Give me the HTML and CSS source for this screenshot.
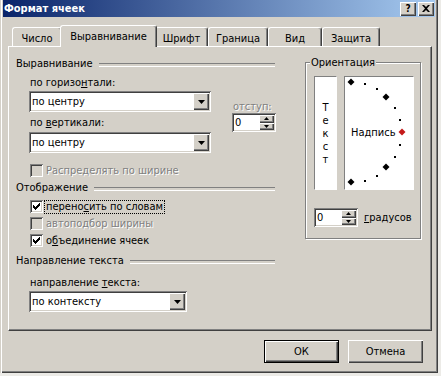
FILE: index.html
```html
<!DOCTYPE html>
<html lang="ru">
<head>
<meta charset="utf-8">
<title>Формат ячеек</title>
<link rel="stylesheet" href="styles.css">
</head>
<body>
<div class="window">
  <div class="titlebar">
    <span class="title">Формат ячеек</span>
    <span class="tbtn tbtn-help">?</span>
    <span class="tbtn"><svg width="8" height="7" viewBox="0 0 8 7"><path d="M0 0h2l2 2 2-2h2L5 3.5 8 7H6L4 5 2 7H0l3-3.5z" fill="#000"/></svg></span>
  </div>
  <div class="client">
    <div class="tabs">
      <div class="tab tab-num">Число</div>
      <div class="tab tab-align active">Выравнивание</div>
      <div class="tab tab-font">Шрифт</div>
      <div class="tab tab-border">Граница</div>
      <div class="tab tab-view">Вид</div>
      <div class="tab tab-prot">Защита</div>
    </div>
    <div class="panel">
      <div class="left">
        <div class="sect">Выравнивание</div>
        <div class="align-body">
          <div class="combos">
            <div class="lbl">по горизо<u>н</u>тали:</div>
            <div class="combo combo-wide">
              <span class="combo-val">по центру</span>
              <span class="drop"><svg width="7" height="4" viewBox="0 0 7 4"><path d="M0 0h7L3.5 4z" fill="#000"/></svg></span>
            </div>
            <div class="lbl lbl-2"><span>по <u>в</u>ертикали:</span></div>
            <div class="combo combo-wide combo-2">
              <span class="combo-val">по центру</span>
              <span class="drop"><svg width="7" height="4" viewBox="0 0 7 4"><path d="M0 0h7L3.5 4z" fill="#000"/></svg></span>
            </div>
          </div>
          <div class="indent">
            <div class="lbl disabled">отступ:</div>
            <div class="spin">
              <span class="spin-val">0</span>
              <span class="spin-btns">
                <span class="sb"><svg width="5" height="3" viewBox="0 0 5 3"><path d="M2.5 0L5 3H0z" fill="#000"/></svg></span>
                <span class="sb"><svg width="5" height="3" viewBox="0 0 5 3"><path d="M0 0h5L2.5 3z" fill="#000"/></svg></span>
              </span>
            </div>
          </div>
        </div>
        <div class="cb-row cb-first disabled">
          <span class="cbox off"></span><span class="cb-text">Распределять по ширине</span>
        </div>
        <div class="sect sect-2">Отображение</div>
        <div class="cb-row cb-a">
          <span class="cbox"><svg width="7" height="7" viewBox="0 0 7 7" shape-rendering="crispEdges"><path d="M0 2h1v3H0zM1 3h1v3H1zM2 4h1v3H2zM3 3h1v3H3zM4 2h1v3H4zM5 1h1v3H5zM6 0h1v3H6z" fill="#000"/></svg></span><span class="cb-text focus">перено<u>с</u>ить по словам</span>
        </div>
        <div class="cb-row cb-b disabled">
          <span class="cbox off"></span><span class="cb-text">автоподбор ширины</span>
        </div>
        <div class="cb-row cb-b">
          <span class="cbox"><svg width="7" height="7" viewBox="0 0 7 7" shape-rendering="crispEdges"><path d="M0 2h1v3H0zM1 3h1v3H1zM2 4h1v3H2zM3 3h1v3H3zM4 2h1v3H4zM5 1h1v3H5zM6 0h1v3H6z" fill="#000"/></svg></span><span class="cb-text">о<u>б</u>ъединение ячеек</span>
        </div>
        <div class="sect sect-3">Направление текста</div>
        <div class="lbl lbl-3">направление <u>т</u>екста:</div>
        <div class="combo combo-narrow">
          <span class="combo-val">по контексту</span>
          <span class="drop"><svg width="7" height="4" viewBox="0 0 7 4"><path d="M0 0h7L3.5 4z" fill="#000"/></svg></span>
        </div>
      </div>
      <div class="orient">
        <span class="legend">Ориентация</span>
        <div class="orient-boxes">
          <div class="vtext"><span>Т</span><span>е</span><span>к</span><span>с</span><span>т</span></div>
          <div class="dial">
            <svg class="dial-svg" width="68" height="112" viewBox="0 0 68 112" shape-rendering="crispEdges">
              <g fill="#000">
                <path d="M6 1.5L9.5 5 6 8.5 2.5 5z" shape-rendering="auto"/>
                <path d="M41 16.5L44.5 20 41 23.5 37.5 20z" shape-rendering="auto"/>
                <path d="M41 86.5L44.5 90 41 93.5 37.5 90z" shape-rendering="auto"/>
                <path d="M6 101.5L9.5 105 6 108.5 2.5 105z" shape-rendering="auto"/>
                <rect x="19" y="6" width="2" height="2"/>
                <rect x="31" y="11" width="2" height="2"/>
                <rect x="49" y="30" width="2" height="2"/>
                <rect x="54" y="42" width="2" height="2"/>
                <rect x="54" y="67" width="2" height="2"/>
                <rect x="49" y="79" width="2" height="2"/>
                <rect x="31" y="98" width="2" height="2"/>
                <rect x="19" y="103" width="2" height="2"/>
              </g>
              <path d="M57 51.5L60.5 55 57 58.5 53.5 55z" fill="#c41a1a" shape-rendering="auto"/>
            </svg>
            <span class="dial-text">Надпись</span>
          </div>
        </div>
        <div class="deg-row">
          <div class="spin">
            <span class="spin-val">0</span>
            <span class="spin-btns">
              <span class="sb"><svg width="5" height="3" viewBox="0 0 5 3"><path d="M2.5 0L5 3H0z" fill="#000"/></svg></span>
              <span class="sb"><svg width="5" height="3" viewBox="0 0 5 3"><path d="M0 0h5L2.5 3z" fill="#000"/></svg></span>
            </span>
          </div>
          <span class="deg-lbl"><u>г</u>радусов</span>
        </div>
      </div>
    </div>
    <div class="buttons">
      <div class="btn btn-default">ОК</div>
      <div class="btn">Отмена</div>
    </div>
  </div>
</div>
</body>
</html>
```

FILE: styles.css
```css
* { box-sizing: border-box; }
html, body { margin: 0; padding: 0; }
body {
  width: 441px;
  height: 376px;
  overflow: hidden;
  background: #ecebe7;
  font-family: "DejaVu Sans Condensed", "DejaVu Sans", "Liberation Sans", sans-serif;
  font-stretch: condensed;
  font-size: 11px;
  line-height: 13px;
  color: #000;
}
u { text-decoration: underline; text-underline-offset: 1px; }

.window {
  width: 438px;
  height: 373px;
  background: #d4d0c8;
  padding: 0 3px 3px 3px;
  box-shadow: inset 1px 0 #d4d0c8, inset 2px 0 #fff, inset -1px -1px #404040, inset -2px -2px #808080;
  display: flex;
  flex-direction: column;
}

/* title bar */
.titlebar {
  height: 17px;
  flex: none;
  background: linear-gradient(to right, #0a246a, #a6caf0);
  display: flex;
  align-items: center;
  padding: 0 1px 0 1px;
}
.title {
  flex: 1;
  color: #fff;
  font-weight: bold;
  font-size: 11px;
}
.tbtn {
  width: 16px;
  height: 14px;
  background: #d4d0c8;
  box-shadow: inset 1px 1px #fff, inset -1px -1px #404040, inset -2px -2px #808080;
  display: flex;
  align-items: center;
  justify-content: center;
  font-weight: bold;
  font-family: "DejaVu Sans", sans-serif;
  font-size: 10px;
  line-height: 10px;
}
.tbtn-help { margin-right: 2px; }

/* client */
.client {
  flex: 1;
  padding: 8px 3px 0 5px;
  display: flex;
  flex-direction: column;
}

.tabs {
  height: 21px;
  display: flex;
  align-items: flex-end;
  padding-left: 4px;
}
.tab {
  height: 19px;
  border: 1px solid;
  border-color: #fff #404040 transparent #fff;
  border-bottom: none;
  border-radius: 3px 3px 0 0;
  box-shadow: inset -1px 0 #808080;
  text-align: center;
  padding-top: 4px;
  white-space: nowrap;
  background: #d4d0c8;
}
.tab.active {
  height: 22px;
  margin: 0 -2px -1px;
  position: relative;
  z-index: 1;
  padding-top: 4px;
}
.tab-num { width: 50px; }
.tab-align { width: 97px; }
.tab-font { width: 53px; }
.tab-border { width: 60px; }
.tab-view { width: 54px; }
.tab-prot { width: 58px; }

.panel {
  height: 285px;
  border: 1px solid;
  border-color: #fff #404040 #404040 #fff;
  box-shadow: inset -1px -1px #808080;
  display: flex;
}

.left {
  width: 296px;
  padding: 10px 0 0 7px;
}

.sect {
  width: 259px;
  display: flex;
  align-items: center;
  white-space: nowrap;
}
.sect::after {
  content: "";
  flex: 1;
  margin-left: 6px;
  height: 2px;
  border-top: 1px solid #808080;
  border-bottom: 1px solid #fff;
  margin-top: 2px;
}
.sect-2 { margin-top: 4px; }
.sect-3 { margin-top: 7px; }

.align-body {
  display: flex;
  padding-left: 13px;
  margin-top: 6px;
}
.combos { width: 182px; }
.lbl { padding-left: 1px; white-space: nowrap; }
.lbl-2 { margin-top: 4px; }
.lbl-3 { margin-top: 9px; padding-left: 14px; }

.combo {
  height: 21px;
  margin-top: 2px;
  background: #fff;
  padding: 2px;
  box-shadow: inset 1px 1px #808080, inset -1px -1px #fff, inset 2px 2px #404040, inset -2px -2px #d4d0c8;
  display: flex;
  align-items: center;
}
.combo-2 { margin-top: 3px; }
.combo-wide { width: 182px; }
.combo-narrow { width: 158px; margin-left: 13px; }
.combo-val { flex: 1; padding-left: 1px; white-space: nowrap; }
.drop {
  width: 16px;
  height: 17px;
  background: #d4d0c8;
  box-shadow: inset 1px 1px #fff, inset -1px -1px #404040, inset -2px -2px #808080;
  display: flex;
  align-items: center;
  justify-content: center;
  padding-top: 1px;
}
.drop svg { display: block; }

.indent {
  margin-left: 21px;
  padding-top: 24px;
}

.spin {
  width: 44px;
  height: 19px;
  background: #fff;
  padding: 2px;
  box-shadow: inset 1px 1px #808080, inset -1px -1px #fff, inset 2px 2px #404040, inset -2px -2px #d4d0c8;
  display: flex;
}
.spin-val { flex: 1; padding-left: 1px; line-height: 15px; }
.spin-btns {
  width: 15px;
  display: flex;
  flex-direction: column;
}
.sb {
  flex: 1;
  background: #d4d0c8;
  box-shadow: inset 1px 1px #fff, inset -1px -1px #404040, inset -2px -2px #808080;
  display: flex;
  align-items: center;
  justify-content: center;
}
.sb svg { display: block; }

.disabled, .disabled .cb-text { color: #808080; text-shadow: 1px 1px #fff; }

.cb-row {
  height: 13px;
  display: flex;
  align-items: center;
  padding-left: 14px;
  white-space: nowrap;
}
.cb-first { margin-top: 11px; }
.cb-a { margin-top: 6px; }
.cb-b { margin-top: 4px; }
.cbox {
  width: 13px;
  height: 13px;
  flex: none;
  background: #fff;
  box-shadow: inset 1px 1px #808080, inset -1px -1px #fff, inset 2px 2px #404040, inset -2px -2px #d4d0c8;
  display: flex;
  align-items: center;
  justify-content: center;
}
.cbox.off { background: #d4d0c8; }
.cbox svg { display: block; }
.cb-text { margin-left: 3px; }
.cb-text.focus {
  margin-left: 1px;
  border: 1px dotted #000;
  padding: 0 1px;
  line-height: 12px;
}

/* orientation */
.orient {
  position: relative;
  margin-top: 15px;
  width: 116px;
  height: 177px;
  border: 1px solid #808080;
  box-shadow: inset 1px 1px #fff, 1px 1px #fff;
  padding: 13px 0 0 8px;
}
.legend {
  position: absolute;
  top: -7px;
  left: 4px;
  padding: 0 1px;
  background: #d4d0c8;
}
.orient-boxes {
  display: flex;
  gap: 7px;
}
.vtext {
  width: 23px;
  height: 114px;
  background: #fff;
  border: 1px solid;
  border-color: #808080 #fff #fff #808080;
  display: flex;
  flex-direction: column;
  align-items: center;
  justify-content: center;
  padding-top: 1px;
}
.dial {
  position: relative;
  width: 70px;
  height: 114px;
  background: #fff;
  border: 1px solid;
  border-color: #808080 #fff #fff #808080;
}
.dial-svg { display: block; }
.dial-text {
  position: absolute;
  left: 6px;
  top: 49px;
}

.deg-row {
  margin-top: 18px;
  display: flex;
  align-items: center;
}
.deg-lbl { margin-left: 6px; }

/* buttons */
.buttons {
  margin-top: 9px;
  display: flex;
  justify-content: flex-end;
  gap: 9px;
  padding-right: 9px;
}
.btn {
  width: 75px;
  height: 23px;
  display: flex;
  align-items: center;
  justify-content: center;
  background: #d4d0c8;
  box-shadow: inset 1px 1px #fff, inset -1px -1px #404040, inset -2px -2px #808080;
}
.btn-default {
  border: 1px solid #000;
}
```
